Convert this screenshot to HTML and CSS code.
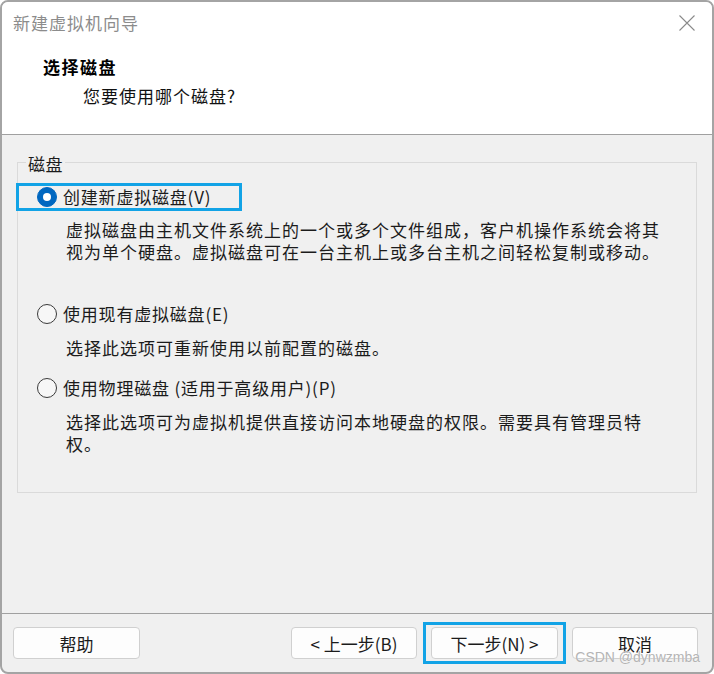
FILE: index.html
```html
<!DOCTYPE html>
<html lang="zh-CN">
<head>
  <meta charset="UTF-8" />
  <meta name="viewport" content="width=device-width, initial-scale=1.0"/>
  <title>新建虚拟机向导</title>
  <link rel="stylesheet" href="styles.css">
</head>
<body>
  <div class="window">
    <div class="titlebar">
      <span class="title">新建虚拟机向导</span>
      <svg class="close" width="16" height="16" viewBox="0 0 16 16">
        <path d="M0.5 0.5 L15.5 15.5 M15.5 0.5 L0.5 15.5" stroke="#8a8a8a" stroke-width="1.1" fill="none" />
      </svg>
    </div>

    <div class="header">
      <div class="header-title">选择磁盘</div>
      <div class="header-sub">您要使用哪个磁盘?</div>
    </div>

    <div class="content">
      <fieldset class="group">
        <legend>磁盘</legend>

        <div class="option">
          <label class="option-row marked"><span class="radio checked"></span>创建新虚拟磁盘(V)</label>
          <p class="desc">虚拟磁盘由主机文件系统上的一个或多个文件组成，客户机操作系统会将其<br>视为单个硬盘。虚拟磁盘可在一台主机上或多台主机之间轻松复制或移动。</p>
        </div>

        <div class="option spaced">
          <label class="option-row"><span class="radio"></span>使用现有虚拟磁盘(E)</label>
          <p class="desc">选择此选项可重新使用以前配置的磁盘。</p>
        </div>

        <div class="option">
          <label class="option-row"><span class="radio"></span>使用物理磁盘 (适用于高级用户)(P)</label>
          <p class="desc">选择此选项可为虚拟机提供直接访问本地硬盘的权限。需要具有管理员特<br>权。</p>
        </div>
      </fieldset>
    </div>

    <div class="footer">
      <button class="btn">帮助</button>
      <div class="spacer"></div>
      <button class="btn">&lt; 上一步(B)</button>
      <span class="focus-ring"><button class="btn">下一步(N) &gt;</button></span>
      <button class="btn">取消</button>
    </div>

    <div class="watermark">CSDN @dynwzmba</div>
  </div>
</body>
</html>
```

FILE: styles.css
```css
html, body {
  margin: 0;
  padding: 0;
  background-color: #ffffff;
  font-family: "Noto Sans CJK SC", "Liberation Sans", sans-serif;
  color: #1b1b1b;
}

.window {
  position: relative;
  box-sizing: border-box;
  width: 714px;
  height: 674px;
  border: 2px solid #a4a4a4;
  border-radius: 8px;
  overflow: hidden;
  background-color: #f0f0f0;
  display: flex;
  flex-direction: column;
}

.titlebar {
  height: 41px;
  flex: none;
  display: flex;
  align-items: center;
  padding: 0 17px 1px 11px;
  background-color: #ffffff;
}

.title {
  flex: 1;
  font-size: 17px;
  letter-spacing: 1px;
  color: #8c8c8c;
}

.close {
  display: block;
}

.header {
  flex: none;
  box-sizing: border-box;
  height: 91px;
  padding: 11px 0 0 41px;
  background-color: #ffffff;
  border-bottom: 1px solid #a0a0a0;
}

.header-title {
  font-size: 17px;
  font-weight: bold;
  letter-spacing: 1.5px;
  line-height: 24px;
  color: #000000;
}

.header-sub {
  margin: 5px 0 0 40px;
  font-size: 17px;
  letter-spacing: 1px;
  line-height: 24px;
  color: #111111;
}

.content {
  flex: 1;
  padding: 16px 15px 0 15px;
}

.group {
  margin: 0;
  padding: 8px 0 37px 0;
  border: 1px solid #dadada;
  min-inline-size: 0;
}

.group legend {
  margin-left: 8px;
  padding: 3px 2px 0;
  font-size: 17px;
  line-height: 20px;
  letter-spacing: 0.5px;
}

.option + .option {
  margin-top: 15px;
}

.option.spaced {
  margin-top: 37px;
}

.option-row {
  display: inline-flex;
  align-items: center;
  box-sizing: border-box;
  height: 28px;
  margin-left: -2px;
  padding: 0 28px 0 18px;
  border: 3px solid transparent;
  font-size: 17px;
  letter-spacing: 0.8px;
  line-height: 22px;
}

.option-row.marked {
  border-color: #12a3e6;
}

.radio {
  box-sizing: border-box;
  width: 20px;
  height: 20px;
  margin-right: 6px;
  border: 1px solid #3a3a3a;
  border-radius: 50%;
  background-color: #f7f7f7;
  display: flex;
  align-items: center;
  justify-content: center;
}

.radio.checked {
  border-color: #0067c0;
  background-color: #0067c0;
}

.radio.checked::after {
  content: "";
  width: 8px;
  height: 8px;
  border-radius: 50%;
  background-color: #ffffff;
}

.desc {
  margin: 8px 0 0 48px;
  font-size: 17px;
  letter-spacing: 1px;
  line-height: 22px;
  white-space: nowrap;
  color: #1b1b1b;
}

.footer {
  height: 59px;
  flex: none;
  box-sizing: border-box;
  border-top: 1px solid #a0a0a0;
  padding: 0 14px 0 11px;
  display: flex;
  align-items: center;
  gap: 14px;
}

.spacer {
  flex: 1;
}

.btn {
  box-sizing: border-box;
  width: 126px;
  height: 32px;
  border: 1px solid #d0d0d0;
  border-radius: 4px;
  background-color: #fdfdfd;
  font-family: "Noto Sans CJK SC", "Liberation Sans", sans-serif;
  font-size: 17px;
  color: #1b1b1b;
  padding: 0;
}

.btn:first-child {
  width: 127px;
}

.focus-ring {
  display: block;
  margin: 0 -8px;
  padding: 2px 5px;
  border: 3px solid #12a3e6;
}

.focus-ring .btn {
  display: block;
}

.watermark {
  position: absolute;
  right: 12px;
  bottom: 7px;
  font-family: "Liberation Sans", sans-serif;
  font-size: 14px;
  color: #b4b4b4;
  text-shadow: 0 0 1px #ffffff;
}
```
